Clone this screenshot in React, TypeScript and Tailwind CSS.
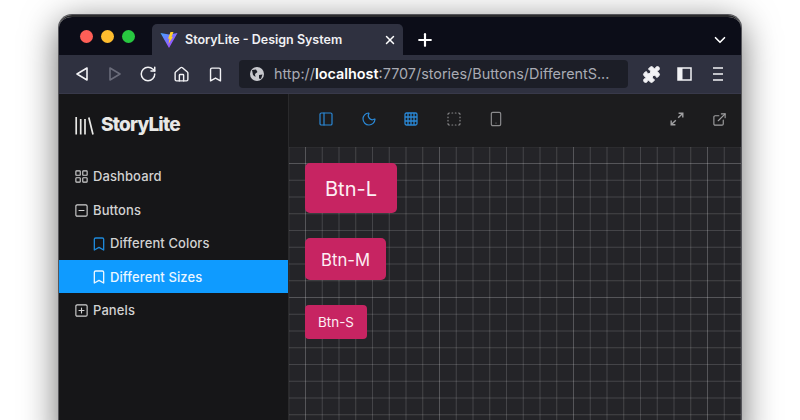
import React from "react";
import { Bookmark, ChevronDown, ExternalLink, Home, Moon, PanelLeft, Plus, RotateCw, Smartphone, SquareDashed, SquareMinus, SquarePlus, X, LayoutGrid, Puzzle } from "lucide-react";

const Tool = ({ children }: { children: React.ReactNode }) => (
  <div className="w-[42.5px] h-[42.5px] flex items-center justify-center">{children}</div>
);

const Slot = ({ children }: { children: React.ReactNode }) => (
  <div className="w-[33.4px] flex items-center justify-center">{children}</div>
);

const ViteLogo = () => (
  <svg width="18" height="18" viewBox="0 0 18 18">
    <defs>
      <linearGradient id="vl" x1="0" y1="0" x2="1" y2="1">
        <stop offset="0" stopColor="#41a5ff" />
        <stop offset="1" stopColor="#bd34fe" />
      </linearGradient>
    </defs>
    <path d="M0.5 2 L9 3.6 L17.5 2 L9 17 Z" fill="url(#vl)" />
    <path d="M10.5 1 L13.5 1 L11.5 6 L13 5.7 L8.5 13 L9.5 7.5 L8 7.8 Z" fill="#ffd028" />
  </svg>
);

const Logo = () => (
  <svg width="19" height="20" viewBox="0 0 19 20" fill="none" stroke="#e8e8e6" strokeWidth="1.7">
    <path d="M1.2 2V19.5M5.7 4V19.5M10 4V19.5M13.8 2.5L18 19.5" />
  </svg>
);

const GridIcon = () => (
  <svg width="14" height="14" viewBox="0 0 14 14" fill="none" stroke="#2a88d6" strokeWidth="1.3">
    <rect x="1" y="1" width="12" height="12" rx="1.5" />
    <path d="M4 1V13M7 1V13M10 1V13M1 5H13M1 9H13" />
  </svg>
);

const ExpandIcon = () => (
  <svg width="14" height="14" viewBox="0 0 14 14" fill="none" stroke="#a0a0a2" strokeWidth="1.4">
    <path d="M8.2 5.8L12.6 1.4M8.6 1.2H12.8V5.4M5.8 8.2L1.4 12.6M1.2 8.6V12.8H5.4" />
  </svg>
);

const NavRow = ({ icon, label, active, nested }: { icon: React.ReactNode; label: string; active?: boolean; nested?: boolean }) => (
  <div className={`h-[33.5px] pt-[2px] flex items-center text-[13px] font-medium tracking-[0.1px] ${nested ? "pl-[31.5px] gap-[3.5px]" : "pl-[15px] gap-[4px]"} ${active ? "bg-[#0f9bff] text-[#eaf6ff]" : "text-[#d2d2d2]"}`}>
    {icon}
    <span>{label}</span>
  </div>
);

export default function App() {
  return (
    <div className="h-[420px] w-[800px] overflow-hidden bg-white pt-[15px] pl-[59px] font-['Inter',sans-serif]">
      <div className="w-[682px] h-[430px] rounded-t-[13px] overflow-hidden flex flex-col shadow-[0_0_0_1px_#55555a,0_8px_36px_rgba(0,0,0,0.6)] border-t-2 border-t-[#2a2a2c]">
        {/* Tab strip */}
        <div className="h-[38px] bg-[#0c0d18] flex items-end shrink-0">
          <div className="h-[31px] flex items-center gap-[8px] pl-[21px] w-[93px] self-center">
            <span className="w-[13px] h-[13px] rounded-full bg-[#ff5f57]" />
            <span className="w-[13px] h-[13px] rounded-full bg-[#febc2e]" />
            <span className="w-[13px] h-[13px] rounded-full bg-[#28c840]" />
          </div>
          <div className="w-[251px] h-[31px] bg-[#2f3140] rounded-t-[5px] flex items-center pl-[8px] pr-[6px] text-white">
            <ViteLogo />
            <span className="ml-[7px] pt-[1px] text-[12.5px] font-semibold text-[#f0f0f4] flex-1">StoryLite - Design System</span>
            <X size={14} strokeWidth={2.5} />
          </div>
          <div className="h-[31px] flex items-center ml-[12px] text-white flex-1">
            <Plus size={20} strokeWidth={2.6} />
            <ChevronDown size={18} strokeWidth={2.2} className="ml-auto mr-[12px]" />
          </div>
        </div>
        {/* Browser toolbar */}
        <div className="h-[39px] bg-[#2f3140] flex items-center shrink-0 text-[#f2f2f5] border-b border-[#38394a]">
          <div className="w-[180px] flex items-center pl-[6px]">
            <Slot>
              <svg width="14" height="14" viewBox="0 0 14 14" fill="none" stroke="currentColor" strokeWidth="1.6" strokeLinejoin="round"><path d="M12 1V13L2 7Z" /></svg>
            </Slot>
            <Slot>
              <svg width="14" height="14" viewBox="0 0 14 14" fill="none" stroke="#6a6c7a" strokeWidth="1.6" strokeLinejoin="round"><path d="M2 1V13L12 7Z" /></svg>
            </Slot>
            <Slot><RotateCw size={18} strokeWidth={2} /></Slot>
            <Slot><Home size={17} strokeWidth={2} /></Slot>
            <Slot><Bookmark size={17} strokeWidth={2} /></Slot>
          </div>
          <div className="w-[389px] h-[28px] rounded-[4px] bg-[#1c1e27] flex items-center pl-[11px] text-[14.4px] text-[#a9abb4] whitespace-nowrap">
            <svg width="14" height="14" viewBox="0 0 14 14" className="mr-[10px]"><circle cx="7" cy="7" r="7" fill="#c8c9ce" /><path d="M2 3 L6 2.5 L7.5 5 L5 7 L5.5 10 L3 8 Z M9 8 L12.5 7.5 L11 12 L9 11.5 Z" fill="#1c1e27" /></svg>
            <span>http://</span><span className="text-white font-semibold">localhost</span><span>:7707/stories/Buttons/DifferentS...</span>
          </div>
          <div className="flex-1 flex items-center pl-[6.5px]">
            <Slot><Puzzle size={19} fill="currentColor" strokeWidth={1.2} /></Slot>
            <Slot>
              <svg width="15" height="14" viewBox="0 0 15 14" fill="none"><rect x="1" y="1" width="13" height="12" stroke="currentColor" strokeWidth="1.5" /><rect x="1" y="1" width="4.5" height="12" fill="currentColor" /></svg>
            </Slot>
            <Slot>
              <svg width="10" height="14" viewBox="0 0 10 14" fill="none" stroke="currentColor" strokeWidth="1.4"><path d="M0 1H10M0 7H10M0 13H10" /></svg>
            </Slot>
          </div>
        </div>
        {/* Page */}
        <div className="flex-1 flex min-h-0">
          <aside className="w-[230px] shrink-0 bg-[#161618] border-r border-[#2a2a2c]">
            <div className="h-[65px] flex items-center pl-[16px] pb-[3px] gap-[7px]">
              <Logo />
              <span className="text-[19px] font-extrabold text-[#e8e8e6] tracking-[-0.8px]">StoryLite</span>
            </div>
            <NavRow icon={<LayoutGrid size={15} strokeWidth={1.8} className="text-[#d2d2d2]" />} label="Dashboard" />
            <NavRow icon={<SquareMinus size={15} strokeWidth={1.8} className="text-[#d2d2d2]" />} label="Buttons" />
            <NavRow nested icon={<Bookmark size={16} className="text-[#1e88d8]" strokeWidth={2} />} label="Different Colors" />
            <NavRow nested active icon={<Bookmark size={16} strokeWidth={2} />} label="Different Sizes" />
            <NavRow icon={<SquarePlus size={15} strokeWidth={1.8} className="text-[#d2d2d2]" />} label="Panels" />
          </aside>
          <main className="flex-1 flex flex-col min-w-0">
            <div className="h-[53px] shrink-0 bg-[#1c1c1e] flex items-center pl-[16px] pb-[3px]">
              <Tool><PanelLeft size={16} strokeWidth={1.8} className="text-[#2a88d6]" /></Tool>
              <Tool><Moon size={16} strokeWidth={1.8} className="text-[#2a88d6]" /></Tool>
              <Tool><GridIcon /></Tool>
              <Tool><SquareDashed size={16} strokeWidth={1.8} className="text-[#8a8a8c]" /></Tool>
              <Tool><Smartphone size={16} strokeWidth={1.8} className="text-[#8a8a8c]" /></Tool>
              <div className="ml-auto flex items-center">
                <Tool><ExpandIcon /></Tool>
                <Tool><ExternalLink size={15} strokeWidth={1.8} className="text-[#a0a0a2]" /></Tool>
              </div>
            </div>
            <div className="flex-1 bg-[#242428] p-[16px] flex flex-col items-start gap-[25px] bg-[linear-gradient(to_right,rgba(255,255,255,0.09)_1px,transparent_1px),linear-gradient(to_bottom,rgba(255,255,255,0.09)_1px,transparent_1px),linear-gradient(to_right,rgba(255,255,255,0.15)_1px,transparent_1px),linear-gradient(to_bottom,rgba(255,255,255,0.15)_1px,transparent_1px)] bg-[size:134px_134px,134px_134px,16.75px_16.75px,16.75px_16.75px] bg-[position:16px_16px,16px_16px,16px_16px,16px_16px]">
              <button className="w-[92px] h-[50px] pt-[1px] rounded-[5px] bg-[#c72462] text-[20px] text-[#fdeef4]">Btn-L</button>
              <button className="w-[81px] h-[42px] pt-[3px] rounded-[5px] bg-[#c72462] text-[16.7px] text-[#fdeef4]">Btn-M</button>
              <button className="w-[62px] h-[34px] pt-[1px] rounded-[4px] bg-[#c72462] text-[13.4px] text-[#fdeef4]">Btn-S</button>
            </div>
          </main>
        </div>
      </div>
    </div>
  );
}
